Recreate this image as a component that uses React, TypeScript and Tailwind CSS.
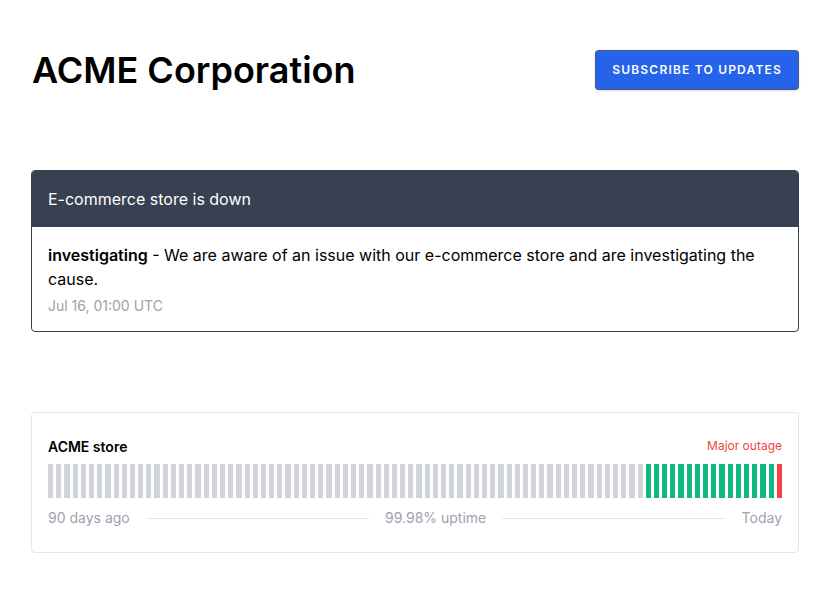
const days = Array.from({ length: 90 }, (_, i) =>
  i < 73 ? 'none' : i < 89 ? 'up' : 'down'
);

const barColor: Record<string, string> = {
  none: 'bg-[#d1d5db]',
  up: 'bg-[#10b981]',
  down: 'bg-[#ef4444]',
};

export default function App() {
  return (
    <div className="min-h-screen w-full bg-white font-[Inter,sans-serif] text-[#111827]">
      <div className="ml-[31px] flex w-[768px] flex-col pt-[50px]">
        {/* HEADER */}
        <div className="flex h-10 items-center justify-between">
          <h1 className="pl-px text-4xl leading-10 font-semibold text-black">
            ACME Corporation
          </h1>
          <button className="h-10 rounded border border-[#4b5563]/70 bg-[#2563eb] px-4 text-xs font-semibold tracking-[0.1em] text-white uppercase shadow-sm">
            Subscribe to updates
          </button>
        </div>

        {/* INCIDENT */}
        <div className="mt-20 overflow-hidden rounded border border-[#374151]">
          <div className="bg-[#374151] px-4 py-4 text-base leading-6 text-white">
            E-commerce store is down
          </div>
          <div className="px-4 pt-4 pb-[15px]">
            <p className="text-base leading-6 text-black">
              <span className="font-semibold">investigating</span> - We are
              aware of an issue with our e-commerce store and are investigating
              the cause.
            </p>
            <p className="mt-[5px] text-sm leading-5 text-[#9ca3af]">
              Jul 16, 01:00 UTC
            </p>
          </div>
        </div>

        {/* COMPONENTS */}
        <div className="mt-[80px] rounded border border-[#e5e7eb] px-4 pt-6 pb-6">
          <div className="flex items-center justify-between">
            <span className="text-sm leading-5 font-semibold text-black">
              ACME store
            </span>
            <span className="-mt-[2px] text-xs leading-4 text-[#ef4444]">
              Major outage
            </span>
          </div>
          <div className="mt-[7px] flex h-[34px] gap-[3px]">
            {days.map((d, i) => (
              <div key={i} className={`flex-1 ${barColor[d]}`} />
            ))}
          </div>
          <div className="mt-[10px] flex items-center gap-4 text-sm leading-5 text-[#9ca3af]">
            <span>90 days ago</span>
            <div className="h-px flex-1 bg-[#e5e7eb]" />
            <span>99.98% uptime</span>
            <div className="h-px flex-1 bg-[#e5e7eb]" />
            <span>Today</span>
          </div>
        </div>
      </div>
    </div>
  );
}
